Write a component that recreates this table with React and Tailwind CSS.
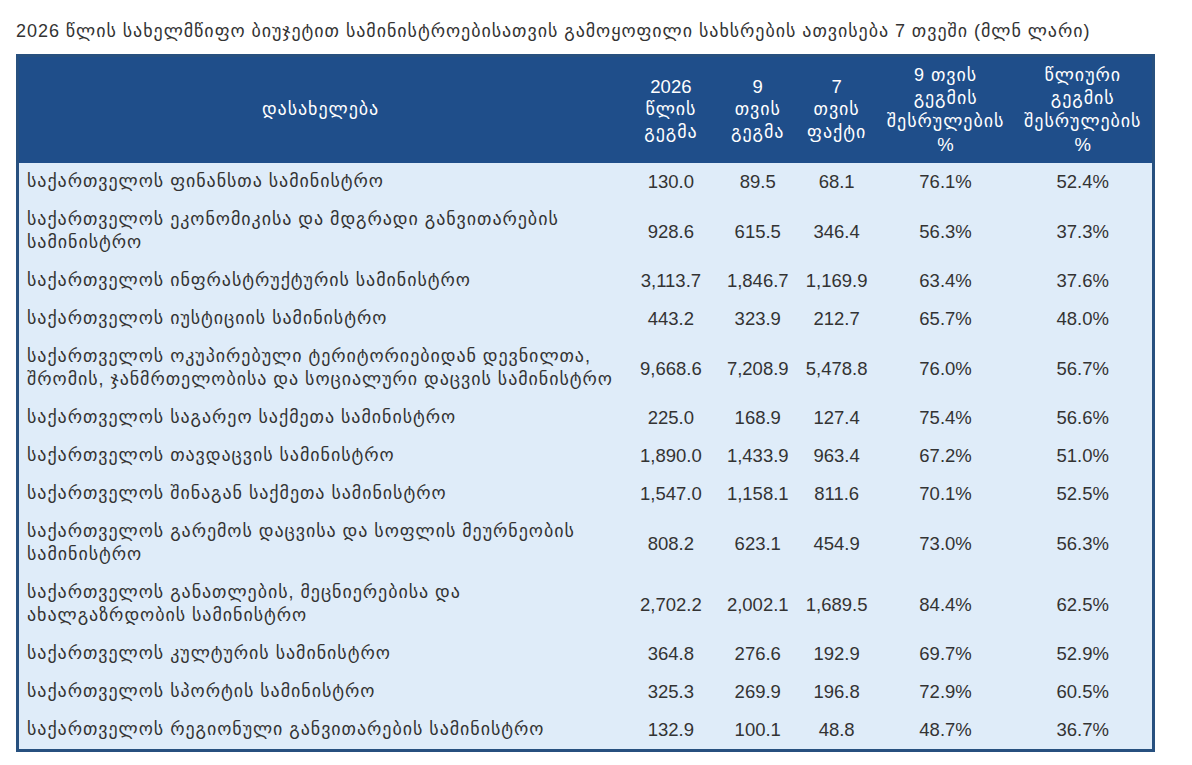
import React from 'react'

const rows = [
  ['საქართველოს ფინანსთა სამინისტრო', '130.0', '89.5', '68.1', '76.1%', '52.4%'],
  ['საქართველოს ეკონომიკისა და მდგრადი განვითარების სამინისტრო', '928.6', '615.5', '346.4', '56.3%', '37.3%'],
  ['საქართველოს ინფრასტრუქტურის სამინისტრო', '3,113.7', '1,846.7', '1,169.9', '63.4%', '37.6%'],
  ['საქართველოს იუსტიციის სამინისტრო', '443.2', '323.9', '212.7', '65.7%', '48.0%'],
  ['საქართველოს ოკუპირებული ტერიტორიებიდან დევნილთა, შრომის, ჯანმრთელობისა და სოციალური დაცვის სამინისტრო', '9,668.6', '7,208.9', '5,478.8', '76.0%', '56.7%'],
  ['საქართველოს საგარეო საქმეთა სამინისტრო', '225.0', '168.9', '127.4', '75.4%', '56.6%'],
  ['საქართველოს თავდაცვის სამინისტრო', '1,890.0', '1,433.9', '963.4', '67.2%', '51.0%'],
  ['საქართველოს შინაგან საქმეთა სამინისტრო', '1,547.0', '1,158.1', '811.6', '70.1%', '52.5%'],
  ['საქართველოს გარემოს დაცვისა და სოფლის მეურნეობის სამინისტრო', '808.2', '623.1', '454.9', '73.0%', '56.3%'],
  ['საქართველოს განათლების, მეცნიერებისა და ახალგაზრდობის სამინისტრო', '2,702.2', '2,002.1', '1,689.5', '84.4%', '62.5%'],
  ['საქართველოს კულტურის სამინისტრო', '364.8', '276.6', '192.9', '69.7%', '52.9%'],
  ['საქართველოს სპორტის სამინისტრო', '325.3', '269.9', '196.8', '72.9%', '60.5%'],
  ['საქართველოს რეგიონული განვითარების სამინისტრო', '132.9', '100.1', '48.8', '48.7%', '36.7%'],
]

const heads = [
  ['2026', 'წლის', 'გეგმა'],
  ['9', 'თვის', 'გეგმა'],
  ['7', 'თვის', 'ფაქტი'],
  ['9 თვის', 'გეგმის', 'შესრულების', '%'],
  ['წლიური', 'გეგმის', 'შესრულების', '%'],
]

// georgian glyphs come from DejaVu, which runs narrower than the original font
const ka = 'text-[18px] tracking-[0.95px]'

export default function App() {
  return (
    <div
      className="bg-white w-[1192px] h-[765px] pl-[16px] pt-[21px] text-[#333333]"
      style={{ fontFamily: '"Liberation Sans", "DejaVu Sans", Arial, sans-serif' }}
    >
      <div className={`${ka} leading-[20px] mb-[13px]`}>
        2026 წლის სახელმწიფო ბიუჯეტით სამინისტროებისათვის გამოყოფილი სახსრების ათვისება 7 თვეში (მლნ ლარი)
      </div>
      <table className="w-[1139px] border-collapse border-[3px] border-[#27507f] bg-[#dfecf9] text-[18.5px]">
        <colgroup>
          <col className="w-[607px]" />
          <col className="w-[98px]" />
          <col className="w-[76px]" />
          <col className="w-[82px]" />
          <col className="w-[136px]" />
          <col className="w-[140px]" />
        </colgroup>
        <thead>
          <tr className="bg-[#1f4e8a] text-white h-[107px] leading-[23px]">
            <th className={`${ka} font-normal text-center align-middle`}>დასახელება</th>
            {heads.map((h, i) => (
              <th key={i} className="font-normal text-center align-middle px-1">
                {h.map((l, j) => (
                  <div key={j} className={/^[0-9%]+$/.test(l) ? '' : ka}>{l}</div>
                ))}
              </th>
            ))}
          </tr>
        </thead>
        <tbody>
          {rows.map((r, i) => (
            <tr key={i} className="leading-[23px]">
              <td className={`${ka} pl-[8px] pr-[2px] py-[7.5px] align-middle`}>{r[0]}</td>
              {r.slice(1).map((v, j) => (
                <td key={j} className="text-center align-middle py-[7.5px]">{v}</td>
              ))}
            </tr>
          ))}
        </tbody>
      </table>
    </div>
  )
}
